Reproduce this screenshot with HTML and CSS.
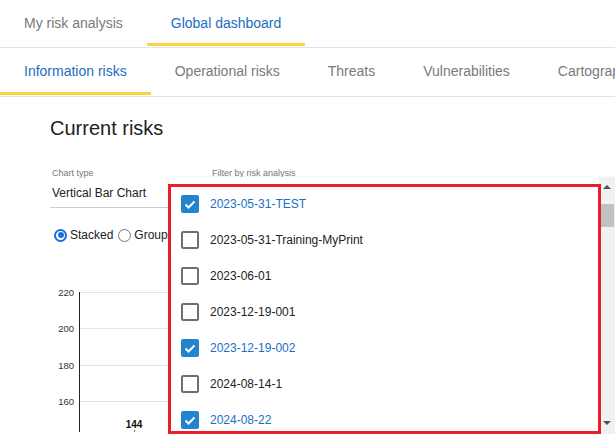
FILE: index.html
```html
<!DOCTYPE html>
<html>
<head>
<meta charset="utf-8">
<link rel="stylesheet" href="styles.css">
</head>
<body>
<nav class="tabs tabs-main">
  <div class="tab">My risk analysis</div>
  <div class="tab active">Global dashboard</div>
</nav>
<nav class="tabs tabs-sub">
  <div class="tab active">Information risks</div>
  <div class="tab">Operational risks</div>
  <div class="tab">Threats</div>
  <div class="tab">Vulnerabilities</div>
  <div class="tab">Cartography</div>
</nav>
<main class="content">
  <h1 class="title">Current risks</h1>
  <div class="form-row">
    <div class="field field-type">
      <div class="field-label">Chart type</div>
      <div class="field-value">Vertical Bar Chart</div>
    </div>
    <div class="field field-filter">
      <div class="field-label">Filter by risk analysis</div>
      <div class="field-value"></div>
    </div>
  </div>
  <div class="radio-row">
    <span class="radio checked"></span><span class="radio-text">Stacked</span>
    <span class="radio"></span><span class="radio-text">Grouped</span>
  </div>
  <svg class="chart" width="565" height="149" viewBox="0 0 565 149">
    <g stroke="#e3e3e3" stroke-width="1">
      <line x1="30" y1="9.5" x2="565" y2="9.5"/>
      <line x1="30" y1="45.5" x2="565" y2="45.5"/>
      <line x1="30" y1="82.5" x2="565" y2="82.5"/>
      <line x1="30" y1="118.5" x2="565" y2="118.5"/>
    </g>
    <line x1="29.5" y1="9" x2="29.5" y2="149" stroke="#222" stroke-width="1"/>
    <g font-family="Liberation Sans, Arial, sans-serif" font-size="9.5" fill="#333" text-anchor="end">
      <text x="24" y="13">220</text>
      <text x="24" y="49">200</text>
      <text x="24" y="86">180</text>
      <text x="24" y="122">160</text>
    </g>
    <text x="84" y="144.5" font-family="Liberation Sans, Arial, sans-serif" font-size="10" font-weight="bold" fill="#111" text-anchor="middle">144</text>
    <line x1="84.5" y1="147" x2="84.5" y2="149" stroke="#3a9a3a" stroke-width="1"/>
  </svg>
</main>

<div class="dropdown">
  <ul class="options">
    <li class="option checked"><span class="box"><svg viewBox="0 0 18 18" width="18" height="18"><polyline points="4.5,9.5 7.5,12.5 13.5,6.5" fill="none" stroke="#fff" stroke-width="2"/></svg></span>2023-05-31-TEST</li>
    <li class="option"><span class="box"></span>2023-05-31-Training-MyPrint</li>
    <li class="option"><span class="box"></span>2023-06-01</li>
    <li class="option"><span class="box"></span>2023-12-19-001</li>
    <li class="option checked"><span class="box"><svg viewBox="0 0 18 18" width="18" height="18"><polyline points="4.5,9.5 7.5,12.5 13.5,6.5" fill="none" stroke="#fff" stroke-width="2"/></svg></span>2023-12-19-002</li>
    <li class="option"><span class="box"></span>2024-08-14-1</li>
    <li class="option checked"><span class="box"><svg viewBox="0 0 18 18" width="18" height="18"><polyline points="4.5,9.5 7.5,12.5 13.5,6.5" fill="none" stroke="#fff" stroke-width="2"/></svg></span>2024-08-22</li>
  </ul>
  <div class="scrollbar">
    <span class="arrow up"></span>
    <span class="thumb"></span>
    <span class="arrow down"></span>
  </div>
</div>
<div class="highlight"></div>
</body>
</html>
```

FILE: styles.css
```css
* { box-sizing: border-box; }
html, body {
  margin: 0;
  padding: 0;
  background: #fff;
  font-family: "Liberation Sans", Arial, sans-serif;
  color: #212121;
  overflow: hidden;
  width: 615px;
  height: 434px;
}
.tabs {
  display: flex;
  white-space: nowrap;
  overflow: hidden;
  border-bottom: 1px solid #e2e2e2;
}
.tabs-main { height: 48px; }
.tabs-sub { height: 49px; }
.tab {
  flex: none;
  padding: 0 24px;
  font-size: 14px;
  color: #7a7a7a;
  display: flex;
  align-items: center;
  border-bottom: 3px solid transparent;
  margin-bottom: 1px;
}
.tabs-main .tab { padding-top: 3px; }
.tabs-sub .tab { padding-top: 2px; }
.tab.active {
  color: #1b6ec2;
  border-bottom-color: #fbd444;
}
.content {
  padding-left: 50px;
}
.title {
  margin: 19px 0 0;
  font-size: 20px;
  line-height: 24px;
  font-weight: normal;
  color: #222;
}
.form-row {
  display: flex;
  margin-top: 28px;
}
.field-type { width: 140px; margin-right: 20px; }
.field-filter { width: 300px; }
.field-label {
  font-size: 9px;
  line-height: 11px;
  color: #777;
  padding-left: 2px;
}
.field-value {
  font-size: 12px;
  line-height: 14px;
  height: 29px;
  padding: 7px 0 0 2px;
  border-bottom: 1px solid #cfcfcf;
  color: #222;
}
.radio-row {
  display: flex;
  align-items: center;
  height: 16px;
  margin-top: 19px;
  padding-left: 4px;
  font-size: 12px;
  color: #222;
}
.radio {
  width: 13px;
  height: 13px;
  border-radius: 50%;
  border: 1px solid #767676;
  margin-right: 3px;
  position: relative;
}
.radio.checked {
  border: 2px solid #1a6fdc;
}
.radio.checked::after {
  content: "";
  position: absolute;
  left: 1.5px;
  top: 1.5px;
  width: 6px;
  height: 6px;
  border-radius: 50%;
  background: #1a6fdc;
}
.radio-text { margin-right: 5px; }
.chart {
  display: block;
  margin-top: 40px;
}
.dropdown {
  position: absolute;
  left: 169px;
  top: 177px;
  width: 446px;
  height: 257px;
  background: #fff;
  box-shadow: 0 1px 3px rgba(0,0,0,0.18);
  display: flex;
}
.options {
  list-style: none;
  margin: 0;
  padding: 9px 0 0;
  flex: 1;
}
.option {
  display: flex;
  align-items: center;
  height: 36px;
  padding-left: 12px;
  font-size: 12px;
  color: #222;
}
.box {
  width: 18px;
  height: 18px;
  border: 2px solid #707070;
  border-radius: 2px;
  margin-right: 11px;
  position: relative;
  flex: none;
}
.option.checked { color: #1a70c4; }
.option.checked .box {
  background: #2383cc;
  border-color: #2383cc;
}
.box svg {
  position: absolute;
  left: -2px;
  top: -2px;
}
.scrollbar {
  width: 16px;
  background: #f1f1f1;
  position: relative;
  flex: none;
}
.arrow {
  position: absolute;
  left: 4px;
  width: 0;
  height: 0;
  border-left: 4px solid transparent;
  border-right: 4px solid transparent;
}
.arrow.up { top: 8px; border-bottom: 4px solid #505050; }
.arrow.down { bottom: 9px; border-top: 4px solid #505050; }
.thumb {
  position: absolute;
  left: 2px;
  right: 1px;
  top: 27px;
  height: 23px;
  background: #c1c1c1;
}
.highlight {
  position: absolute;
  left: 168px;
  top: 184px;
  width: 433px;
  height: 250px;
  border: 3px solid #ea1d2a;
  pointer-events: none;
}
```
